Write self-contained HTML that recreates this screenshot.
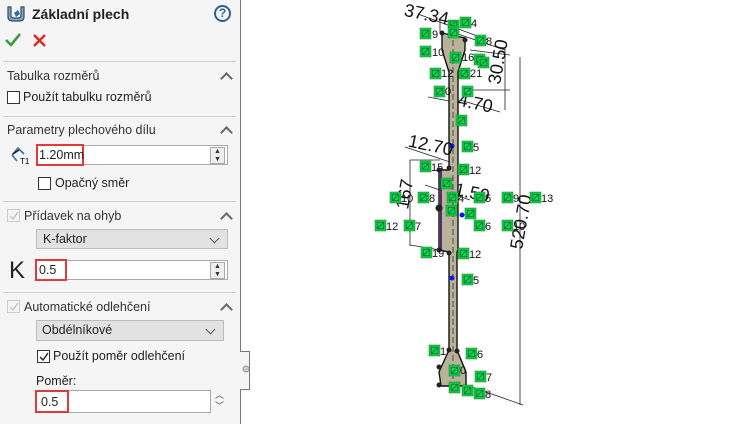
<!DOCTYPE html>
<html><head><meta charset="utf-8"><style>
*{margin:0;padding:0;box-sizing:border-box}
body{width:750px;height:424px;overflow:hidden;background:#fff;font-family:"Liberation Sans",Arial,sans-serif;font-size:12px;color:#222;position:relative}
.p{position:absolute}
#panel{left:0;top:0;width:241px;height:424px;background:#f5f5f5;border-right:1px solid #777}
#bump{left:240px;top:351px;width:10px;height:39px;background:#f5f5f5;border:1px solid #777;border-left:none}
.sep{position:absolute;left:3px;width:233px;height:1px;background:#cfcfcf}
.h{position:absolute;left:7px;font-size:12.5px;color:#333}
.chev{position:absolute;left:222px;width:9px;height:9px;border-left:2px solid #666;border-top:2px solid #666;transform:rotate(45deg)}
.cb{position:absolute;width:13px;height:13px;border:1px solid #333;background:#fff}
.inp{position:absolute;background:#fff;border:1px solid #aaa}
.red{position:absolute;border:2px solid #e03b3b}
.spin{position:absolute;width:15px;height:17px;border:1px solid #aaa;background:#eee;font-size:7px;line-height:8px;text-align:center;color:#333}
.dd{position:absolute;background:#e2e2e2;border:1px solid #bdbdbd;font-size:12.5px;padding:2px 0 0 6px}
.dd:after{content:"";position:absolute;right:9px;top:5px;width:6px;height:6px;border-right:1px solid #555;border-bottom:1px solid #555;transform:rotate(45deg)}
</style></head><body>
<div id="panel" class="p"></div>
<div id="bump" class="p"></div>
<svg class="p" style="left:6px;top:5px" width="20" height="18" viewBox="0 0 20 18"><path d="M2 2 L2 12 Q2 16 7 16 L14 16 Q18 16 18 12 L18 2 L15 2 L15 11 Q15 13 12 13 L8 13 Q5 13 5 11 L5 2Z" fill="#8aa4c0" stroke="#2f4b6b" stroke-width="1.2"/><path d="M8 8 L12 5 L14 9 L10 12Z" fill="#3a6da3"/></svg>
<div class="p" style="left:32px;top:6px;font-size:14px;font-weight:bold;color:#222">Základní plech</div>
<div class="p" style="left:214px;top:5px;width:17px;height:17px;border:2px solid #2f5f9a;border-radius:50%;text-align:center;font-weight:bold;font-size:12px;line-height:13px;color:#2f5f9a">?</div>
<svg class="p" style="left:5px;top:33px" width="16" height="14"><path d="M1 7 L6 12 L15 1" stroke="#3a9b3a" stroke-width="2.6" fill="none"/></svg>
<svg class="p" style="left:33px;top:34px" width="13" height="13"><path d="M1 1 L12 12 M12 1 L1 12" stroke="#e02424" stroke-width="2.3"/></svg>
<div class="sep" style="top:61px"></div>
<div class="h" style="top:69px">Tabulka rozměrů</div><div class="chev" style="top:74px"></div>
<div class="cb" style="left:7px;top:91px"></div><div class="p" style="left:23px;top:90px;font-size:12.5px">Použít tabulku rozměrů</div>
<div class="sep" style="top:116px"></div>
<div class="h" style="top:123px">Parametry plechového dílu</div><div class="chev" style="top:128px"></div>
<svg class="p" style="left:9px;top:145px" width="20" height="20"><path d="M3 10 L9 3 L15 9" stroke="#3a6da3" stroke-width="1.6" fill="none"/><path d="M3 10 L8 16" stroke="#3a6da3" stroke-width="1.6"/><path d="M4 9 L10 5" stroke="#222" stroke-width="1.5"/><text x="11" y="19" font-size="8" font-family="Liberation Sans">T1</text></svg>
<div class="inp" style="left:36px;top:145px;width:192px;height:20px"></div>
<div class="red" style="left:36px;top:144px;width:48px;height:22px"></div>
<div class="p" style="left:39px;top:148px;font-size:12.5px">1.20mm</div>
<div class="spin" style="left:210px;top:147px">▲<br>▼</div>
<div class="cb" style="left:38px;top:177px"></div><div class="p" style="left:55px;top:176px;font-size:12.5px">Opačný směr</div>
<div class="sep" style="top:201px"></div>
<div class="cb" style="left:7px;top:209px;border-color:#ccc;background:#f5f5f5"></div>
<svg class="p" style="left:8px;top:210px" width="12" height="12"><path d="M2 6 L5 9 L10 2" stroke="#bbb" stroke-width="1.2" fill="none"/></svg>
<div class="h" style="top:209px;left:24px">Přídavek na ohyb</div><div class="chev" style="top:214px"></div>
<div class="dd" style="left:36px;top:229px;width:192px;height:20px">K-faktor</div>
<div class="p" style="left:9px;top:257px;font-size:24px;color:#222">K</div>
<div class="inp" style="left:36px;top:260px;width:192px;height:20px"></div>
<div class="red" style="left:35px;top:259px;width:32px;height:22px"></div>
<div class="p" style="left:39px;top:263px;font-size:12.5px">0.5</div>
<div class="spin" style="left:210px;top:262px">▲<br>▼</div>
<div class="sep" style="top:292px"></div>
<div class="cb" style="left:7px;top:300px;border-color:#ccc;background:#f5f5f5"></div>
<svg class="p" style="left:8px;top:301px" width="12" height="12"><path d="M2 6 L5 9 L10 2" stroke="#bbb" stroke-width="1.2" fill="none"/></svg>
<div class="h" style="top:300px;left:24px">Automatické odlehčení</div><div class="chev" style="top:305px"></div>
<div class="dd" style="left:36px;top:320px;width:188px;height:21px;padding-left:5px">Obdélníkové</div>
<div class="cb" style="left:37px;top:350px"></div>
<svg class="p" style="left:38px;top:351px" width="12" height="12"><path d="M2 6 L5 9 L10 2" stroke="#222" stroke-width="1.4" fill="none"/></svg>
<div class="p" style="left:53px;top:349px;font-size:12.5px">Použít poměr odlehčení</div>
<div class="p" style="left:36px;top:374px;font-size:12.5px">Poměr:</div>
<div class="inp" style="left:36px;top:390px;width:175px;height:23px"></div>
<div class="red" style="left:35px;top:390px;width:34px;height:23px"></div>
<div class="p" style="left:41px;top:395px;font-size:12.5px">0.5</div>
<div class="p" style="left:215px;top:390px;font-size:9px;line-height:11px;color:#444">︿<br>﹀</div>
<svg class="p" style="left:242px;top:365px" width="8" height="8"><circle cx="4" cy="4" r="3" fill="#ccc" stroke="#999"/></svg>

<svg class="p" style="left:0;top:0" width="750" height="424" font-family="Liberation Sans">
<defs><pattern id="g" width="1" height="1" patternContentUnits="objectBoundingBox"><rect width="1" height="1" fill="#19d14a"/><rect x="0.2" y="0.2" width="0.6" height="0.6" fill="none" stroke="#073" stroke-width="0.08"/><line x1="0.2" y1="0.8" x2="0.8" y2="0.2" stroke="#073" stroke-width="0.08"/></pattern></defs>
<g stroke="#222" stroke-width="0.8" fill="none">
<line x1="418" y1="14" x2="488" y2="40"/><line x1="440" y1="20" x2="440" y2="33"/>
<line x1="455" y1="33" x2="505" y2="50"/><line x1="470" y1="50" x2="510" y2="55"/>
<line x1="505" y1="48" x2="505" y2="110"/><line x1="468" y1="90" x2="510" y2="90"/>
<line x1="460" y1="100" x2="500" y2="112"/><line x1="428" y1="97" x2="460" y2="103"/>
<line x1="520" y1="57" x2="520" y2="405"/><line x1="466" y1="385" x2="523" y2="405"/>
<line x1="405" y1="147" x2="450" y2="162"/><line x1="410" y1="160" x2="440" y2="160"/>
<line x1="410" y1="160" x2="410" y2="246"/><line x1="410" y1="245" x2="440" y2="250"/>
<line x1="425" y1="185" x2="470" y2="200"/>
</g>
<polygon points="442,33 465,38 465,50 458,72 458,170 458,250 457,252 457,350 466,372 466,386 441,386 439,372 449,350 449,252 439,250 439,170 449,170 449,72 442,50" fill="#b9b29a" stroke="#111" stroke-width="1.4"/>
<line x1="441" y1="168" x2="441" y2="250" stroke="#5a2a7a" stroke-width="2"/>
<line x1="453" y1="40" x2="453" y2="385" stroke="#333" stroke-width="0.8" stroke-dasharray="6,3"/>
<g fill="#222"><circle cx="442" cy="33" r="2.5"/><circle cx="465" cy="40" r="2.5"/><circle cx="439" cy="170" r="2.5"/><circle cx="449" cy="168" r="2.5"/><circle cx="439" cy="250" r="2.5"/><circle cx="449" cy="253" r="2.5"/><circle cx="439" cy="208" r="3.5"/><circle cx="449" cy="350" r="2.5"/><circle cx="457" cy="351" r="2.5"/><circle cx="439" cy="367" r="2.5"/><circle cx="439" cy="385" r="2.5"/></g>
<g fill="#1010ff"><circle cx="452" cy="146" r="2.5"/><circle cx="452" cy="278" r="2.5"/><circle cx="462" cy="215" r="2.5"/></g>
<g font-size="18" fill="#111">
<text x="404" y="19" transform="rotate(12 420 14)">37.34</text>
<text x="408" y="150" transform="rotate(12 425 145)">12.70</text>
<text x="458" y="108" transform="rotate(12 470 102)">4.70</text>
<text x="455" y="197" transform="rotate(12 465 190)">1.50</text>
<text x="500" y="85" transform="rotate(-80 500 85)">30.50</text>
<text x="408" y="210" transform="rotate(-80 408 210)">167</text>
<text x="522" y="250" transform="rotate(-80 522 250)">520.70</text>
</g>
<g fill="url(#g)" stroke="#0a7a20" stroke-width="0.5">
<rect x="420" y="28" width="11" height="11"/><rect x="448" y="27" width="11" height="11"/><rect x="460" y="17" width="11" height="11"/><rect x="448" y="20" width="11" height="7"/>
<rect x="420" y="46" width="11" height="11"/><rect x="475" y="35" width="11" height="11"/><rect x="450" y="52" width="11" height="11"/><rect x="474" y="54" width="11" height="11"/><rect x="478" y="57" width="11" height="11"/>
<rect x="430" y="68" width="11" height="11"/><rect x="459" y="68" width="11" height="11"/><rect x="434" y="86" width="11" height="11"/><rect x="462" y="86" width="11" height="11"/><rect x="456" y="115" width="11" height="11"/>
<rect x="462" y="141" width="11" height="11"/><rect x="420" y="161" width="11" height="11"/><rect x="458" y="164" width="11" height="11"/><rect x="441" y="178" width="11" height="11"/>
<rect x="390" y="192" width="11" height="11"/><rect x="418" y="192" width="11" height="11"/><rect x="447" y="192" width="11" height="11"/><rect x="474" y="192" width="11" height="11"/><rect x="502" y="192" width="11" height="11"/><rect x="530" y="192" width="11" height="11"/>
<rect x="375" y="220" width="11" height="11"/><rect x="404" y="220" width="11" height="11"/><rect x="474" y="220" width="11" height="11"/><rect x="502" y="220" width="11" height="11"/><rect x="446" y="205" width="11" height="11"/><rect x="465" y="208" width="11" height="11"/>
<rect x="421" y="247" width="11" height="11"/><rect x="458" y="248" width="11" height="11"/><rect x="462" y="274" width="11" height="11"/>
<rect x="429" y="345" width="11" height="11"/><rect x="466" y="348" width="11" height="11"/><rect x="449" y="365" width="11" height="11"/><rect x="475" y="371" width="11" height="11"/><rect x="449" y="382" width="11" height="11"/><rect x="462" y="385" width="11" height="11"/><rect x="474" y="388" width="11" height="11"/>
</g>
<g font-size="11" fill="#111">
<text x="432" y="38">9</text><text x="471" y="27">4</text><text x="432" y="56">10</text><text x="486" y="45">8</text><text x="462" y="61">16</text>
<text x="441" y="77">12</text><text x="470" y="77">21</text><text x="445" y="95">0</text><text x="473" y="151">5</text><text x="431" y="171">15</text><text x="469" y="174">12</text>
<text x="401" y="202">10</text><text x="429" y="202">8</text><text x="458" y="202">4</text><text x="485" y="202">5</text><text x="513" y="202">9</text><text x="541" y="202">13</text>
<text x="386" y="230">12</text><text x="415" y="230">7</text><text x="485" y="230">6</text><text x="513" y="230">10</text>
<text x="432" y="257">19</text><text x="469" y="258">12</text><text x="473" y="284">5</text>
<text x="440" y="355">1</text><text x="477" y="358">6</text><text x="460" y="374">0</text><text x="486" y="381">7</text><text x="485" y="398">8</text>
</g>
</svg>
</body></html>
